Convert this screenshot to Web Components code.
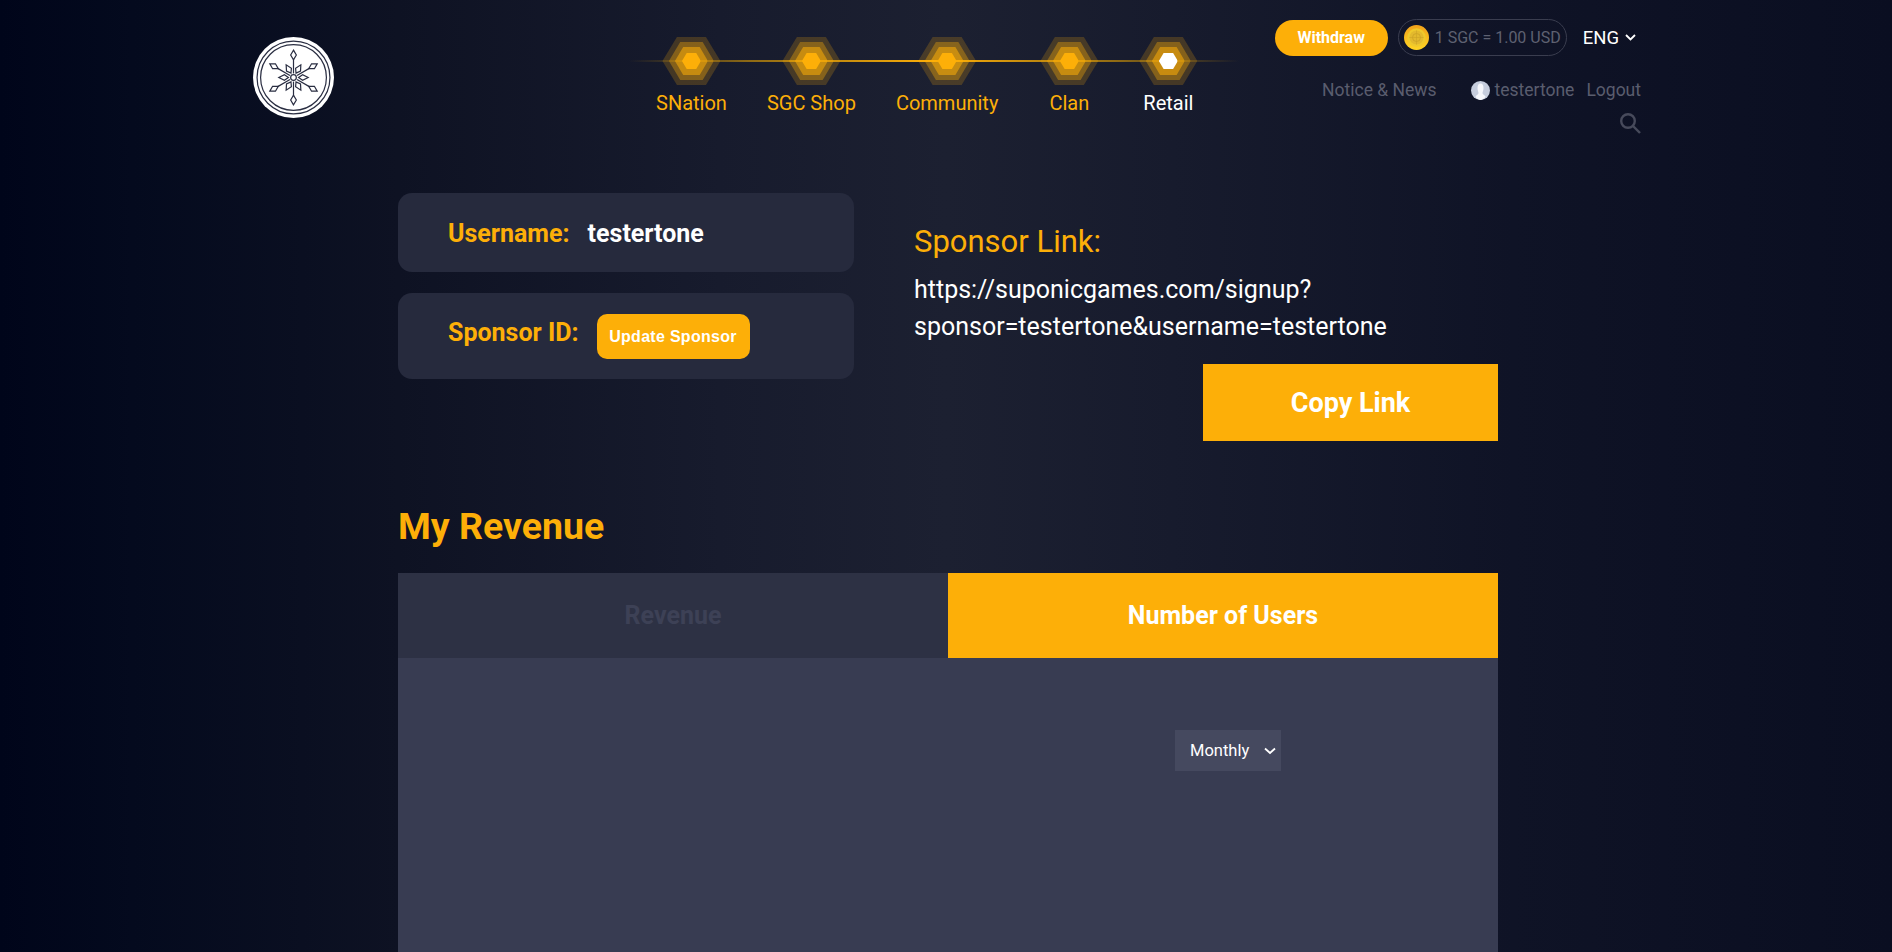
<!DOCTYPE html>
<html lang="en">
<head>
<meta charset="utf-8">
<title>My Revenue</title>
<style>
  html, body { margin: 0; height: 952px; overflow: hidden; }
  body {
    font-family: Roboto, "Liberation Sans", sans-serif;
    background: linear-gradient(90deg, #00051a 0%, #040a1e 7%, #0a0f21 16%, #0e1223 21%, #171b2d 38%, #1c2031 50%, #171b2d 62%, #0f1326 80%, #0a0e21 100%);
    color: #fff;
  }
</style>
</head>
<body>
<site-header></site-header>
<sponsor-section></sponsor-section>
<revenue-section></revenue-section>

<script>
class SiteLogo extends HTMLElement {
  constructor() {
    super();
    this.attachShadow({ mode: "open" });
    let arms = "";
    for (let a = 0; a < 360; a += 60) {
      arms += `<g transform="rotate(${a} 40 40)">
        <line x1="40" y1="36" x2="40" y2="22"/>
        <path d="M40 13l2.800 4.800L40 22.600l-2.800-4.800z"/>
        <path d="M40 35l2.800-4L40 25.500l-2.800 5.500z" transform="rotate(30 40 40)"/>
      </g>`;
    }
    this.shadowRoot.innerHTML = `
      <style>
        :host { display: block; width: 81px; height: 81px; }
        svg { display: block; }
        g { fill: none; stroke: #2a2e42; stroke-width: 1.2; }
      </style>
      <svg width="81" height="81" viewBox="0 0 80 80">
        <circle cx="40" cy="40" r="40" fill="#fff"/>
        <circle cx="40" cy="40" r="36" fill="none" stroke="#2a2e42" stroke-width="1.200"/>
        <circle cx="40" cy="40" r="32.500" fill="none" stroke="#2a2e42" stroke-width="1.200"/>
        <g>${arms}<circle cx="40" cy="40" r="2.800"/></g>
      </svg>
    `;
  }
}
customElements.define("site-logo", SiteLogo);

class NavItem extends HTMLElement {
  constructor() {
    super();
    this.attachShadow({ mode: "open" });
    const hex = "polygon(25% 0, 75% 0, 100% 50%, 75% 100%, 25% 100%, 0 50%)";
    this.shadowRoot.innerHTML = `
      <style>
        :host { display: flex; flex-direction: column; align-items: center; color: #fdaf08; font-size: 20px; line-height: 23px; }
        :host([active]) { color: #fff; }
        .hex { position: relative; width: 58px; height: 48px; margin-bottom: 7px; }
        .hex i { position: absolute; left: 50%; top: 50%; transform: translate(-50%, -50%); clip-path: ${hex}; background: #fdaf08; }
        .l1 { width: 58px; height: 48px; opacity: .2; }
        .l2 { width: 45px; height: 38px; opacity: .35; }
        .l3 { width: 33px; height: 28px; opacity: .55; }
        .hex .l4 { width: 19px; height: 16px; }
        :host([active]) .hex .l4 { background: #fff; }
      </style>
      <div class="hex"><i class="l1"></i><i class="l2"></i><i class="l3"></i><i class="l4"></i></div>
      <slot></slot>
    `;
  }
}
customElements.define("nav-item", NavItem);

class MainNav extends HTMLElement {
  constructor() {
    super();
    this.attachShadow({ mode: "open" });
    this.shadowRoot.innerHTML = `
      <style>
        :host { display: flex; position: relative; padding-top: 37px; }
        .line {
          position: absolute; left: 0; right: 0; top: 60px; height: 2px;
          background: linear-gradient(90deg, transparent, #8f6a14 20%, #fdaf08 50%, #8f6a14 80%, transparent);
        }
        ::slotted(nav-item) { position: relative; }
      </style>
      <div class="line"></div>
      <slot></slot>
    `;
  }
}
customElements.define("main-nav", MainNav);

class SiteHeader extends HTMLElement {
  constructor() {
    super();
    this.attachShadow({ mode: "open" });
    this.shadowRoot.innerHTML = `
      <style>
        :host { display: flex; align-items: flex-start; height: 193px; padding: 0 251px 0 253px; box-sizing: border-box; }
        site-logo { margin-top: 37px; }
        main-nav { margin-left: 295px; width: 610px; }
        nav-item:nth-child(1) { margin-left: 27px; }
        nav-item:nth-child(2) { margin-left: 40px; }
        nav-item:nth-child(3) { margin-left: 40px; }
        nav-item:nth-child(4) { margin-left: 42px; }
        nav-item:nth-child(5) { margin-left: 41px; }
        .right { margin-left: auto; display: flex; flex-direction: column; align-items: flex-end; }
        .top { display: flex; align-items: center; margin-top: 19px; margin-right: 5px; height: 37px; }
        .withdraw {
          width: 113px; height: 36px; border-radius: 18px; background: #fdaf08;
          font-size: 16px; font-weight: 700; display: flex; align-items: center; justify-content: center;
        }
        .rate {
          display: flex; align-items: center; height: 37px; box-sizing: border-box; width: 169px; margin-left: 10px;
          border: 1px solid #3a3d4f; border-radius: 19px; padding-left: 5px; font-size: 16px; color: #5e6171; white-space: nowrap;
        }
        .rate svg { margin-right: 6px; flex: none; }
        .lang { display: flex; align-items: center; margin-left: 16px; font-size: 18.500px; color: #fff; }
        .lang svg { margin-left: 6px; }
        .links { display: flex; align-items: center; margin-top: 24px; font-size: 17.500px; line-height: 20px; color: #5a5d6e; }
        .links .news { margin-right: 34px; }
        .links svg { margin-right: 5px; }
        .links .out { margin-left: 12px; }
        .search { display: block; margin-top: 13px; }
      </style>
      <site-logo></site-logo>
      <main-nav>
        <nav-item>SNation</nav-item>
        <nav-item>SGC Shop</nav-item>
        <nav-item>Community</nav-item>
        <nav-item>Clan</nav-item>
        <nav-item active>Retail</nav-item>
      </main-nav>
      <div class="right">
        <div class="top">
          <div class="withdraw">Withdraw</div>
          <div class="rate">
            <svg width="25" height="25" viewBox="0 0 25 25">
              <defs><linearGradient id="coin" x1="0" y1="0" x2="0" y2="1"><stop offset="0" stop-color="#f2a21a"/><stop offset="1" stop-color="#ffd524"/></linearGradient></defs>
              <circle cx="12.500" cy="12.500" r="12.500" fill="url(#coin)"/>
              <circle cx="12.500" cy="12.500" r="9.300" fill="#efc92c"/>
              <circle cx="12.500" cy="12.500" r="7" fill="#e3b92d"/>
              <circle cx="12.500" cy="12.500" r="4" fill="none" stroke="#cda225" stroke-width=".800"/>
              <path d="M5.500 12.500h14M12.500 5.500v14" stroke="#cda225" stroke-width=".600"/>
            </svg>
            1 SGC = 1.00 USD
          </div>
          <div class="lang">ENG
            <svg width="11" height="7" viewBox="0 0 11 7"><path d="M1 1l4.500 4.500L10 1" fill="none" stroke="#fff" stroke-width="1.800"/></svg>
          </div>
        </div>
        <div class="links">
          <span class="news">Notice &amp; News</span>
          <svg width="19" height="19" viewBox="0 0 19 19">
            <circle cx="9.500" cy="9.500" r="9.500" fill="#c6cddd"/>
            <path d="M9.500 2.500c2 0 3 1.800 3 4.500 0 2.500-1 4-1 5 0 1.500 2 2 3 3.500-1.200 2-3 3.500-5 3.500s-3.800-1.500-5-3.500c1-1.500 3-2 3-3.500 0-1-1-2.500-1-5 0-2.700 1-4.500 3-4.500z" fill="#f6f7fb"/>
          </svg>
          <span>testertone</span>
          <span class="out">Logout</span>
        </div>
        <svg class="search" width="21" height="21" viewBox="0 0 21 21" fill="none" stroke="#474a5b" stroke-width="2.400">
          <circle cx="8" cy="8" r="6.800"/><path d="M13 13l7 7"/>
        </svg>
      </div>
    `;
  }
}
customElements.define("site-header", SiteHeader);

class InfoCard extends HTMLElement {
  constructor() {
    super();
    this.attachShadow({ mode: "open" });
    this.shadowRoot.innerHTML = `
      <style>
        :host { display: flex; align-items: center; box-sizing: border-box; background: #262a3d; border-radius: 14px; padding-left: 50px; font-size: 25px; font-weight: 700; color: #fdaf08; }
      </style>
      <slot></slot>
    `;
  }
}
customElements.define("info-card", InfoCard);

class SponsorSection extends HTMLElement {
  constructor() {
    super();
    this.attachShadow({ mode: "open" });
    this.shadowRoot.innerHTML = `
      <style>
        :host { display: flex; width: 1100px; margin-left: 398px; height: 248px; }
        .cards { width: 456px; display: flex; flex-direction: column; gap: 21px; flex: none; }
        .user { height: 79px; padding-top: 2px; }
        .sponsor { height: 86px; }
        .name { color: #fff; margin-left: 18px; }
        .sid { margin-bottom: 8px; }
        button {
          margin-left: 18px; width: 153px; height: 45px; border: 0; border-radius: 10px; background: #fdaf08; color: #fff;
          font: 700 16px "Liberation Sans", Arial, sans-serif; letter-spacing: .3px; padding: 0; margin-top: 1px;
        }
        .link { margin-left: 60px; flex: 1; }
        h2 { margin: 31px 0 0; font-size: 31px; line-height: 36px; font-weight: 400; color: #fdaf08; }
        p { margin: 11px 0 0; font-size: 25px; line-height: 37px; color: #fff; }
        .copy {
          display: flex; align-items: center; justify-content: center; margin: 19px 0 0 auto; width: 295px; height: 77px;
          background: #fdaf08; font-size: 27px; font-weight: 700; color: #fff;
        }
      </style>
      <div class="cards">
        <info-card class="user">Username:<span class="name">testertone</span></info-card>
        <info-card class="sponsor"><span class="sid">Sponsor ID:</span><button>Update Sponsor</button></info-card>
      </div>
      <div class="link">
        <h2>Sponsor Link:</h2>
        <p>https://suponicgames.com/signup?<br>sponsor=testertone&amp;username=testertone</p>
        <div class="copy">Copy Link</div>
      </div>
    `;
  }
}
customElements.define("sponsor-section", SponsorSection);

class RevenueSection extends HTMLElement {
  constructor() {
    super();
    this.attachShadow({ mode: "open" });
    this.shadowRoot.innerHTML = `
      <style>
        :host { display: block; width: 1100px; margin-left: 398px; }
        h1 { margin: 0; padding-top: 63px; height: 69px; font-size: 37.500px; line-height: 44px; font-weight: 700; color: #fdaf08; }
        .tabs { display: flex; height: 85px; font-size: 25px; font-weight: 700; }
        .tabs div { flex: 1; display: flex; align-items: center; justify-content: center; }
        .off { background: #2d3144; color: #3d4156; }
        .on { background: #fdaf08; color: #fff; }
        .panel { background: #383c52; height: 294px; box-sizing: border-box; padding: 72px 217px 0 0; display: flex; justify-content: flex-end; align-items: flex-start; }
        .select {
          display: flex; align-items: center; justify-content: space-between; box-sizing: border-box;
          width: 106px; height: 41px; padding: 0 5px 0 15px; background: #45495f; font-size: 16.500px; color: #fff;
        }
      </style>
      <h1>My Revenue</h1>
      <div class="tabs"><div class="off">Revenue</div><div class="on">Number of Users</div></div>
      <div class="panel">
        <div class="select">Monthly
          <svg width="12" height="8" viewBox="0 0 12 8"><path d="M1 1.500l5 4.500 5-4.500" fill="none" stroke="#fff" stroke-width="1.800"/></svg>
        </div>
      </div>
    `;
  }
}
customElements.define("revenue-section", RevenueSection);
</script>
</body>
</html>
